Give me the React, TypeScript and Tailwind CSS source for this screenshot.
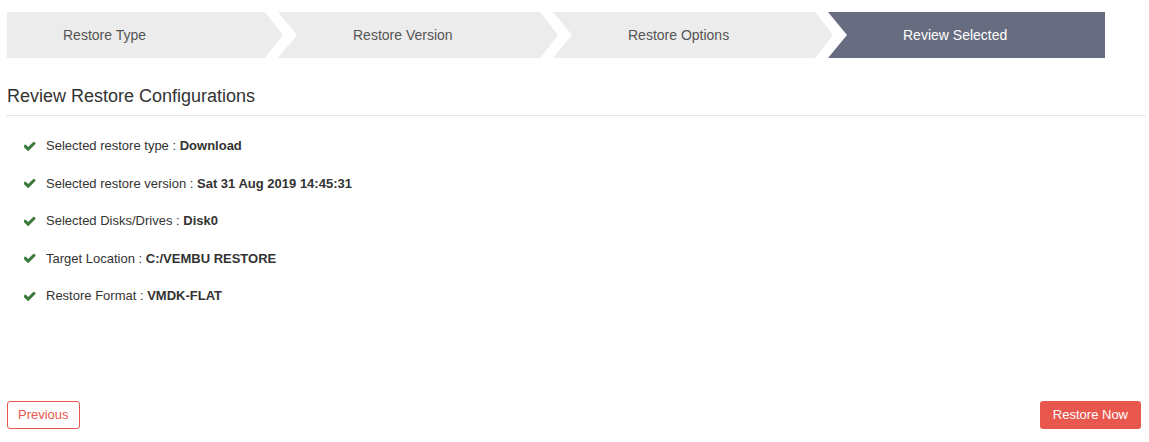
import React from 'react';

const steps = [
  { label: 'Restore Type', first: true, last: false, active: false },
  { label: 'Restore Version', first: false, last: false, active: false },
  { label: 'Restore Options', first: false, last: false, active: false },
  { label: 'Review Selected', first: false, last: true, active: true },
];

const summary: { label: string; value: string }[] = [
  { label: 'Selected restore type', value: 'Download' },
  { label: 'Selected restore version', value: 'Sat 31 Aug 2019 14:45:31' },
  { label: 'Selected Disks/Drives', value: 'Disk0' },
  { label: 'Target Location', value: 'C:/VEMBU RESTORE' },
  { label: 'Restore Format', value: 'VMDK-FLAT' },
];

const CheckIcon: React.FC = () => (
  <svg width="12" height="10" viewBox="0 0 1536 1200" className="shrink-0">
    <path
      fill="#3b7a3b"
      d="M1484 281q0 40-28 68l-724 724-136 136q-28 28-68 28t-68-28l-136-136-362-362q-28-28-28-68t28-68l136-136q28-28 68-28t68 28l294 295 656-657q28-28 68-28t68 28l136 136q28 28 28 68z"
    />
  </svg>
);

const Step: React.FC<{ label: string; first: boolean; last: boolean; active: boolean }> = ({
  label,
  first,
  last,
  active,
}) => {
  const clip = first
    ? 'polygon(0 0, calc(100% - 18px) 0, 100% 50%, calc(100% - 18px) 100%, 0 100%)'
    : last
    ? 'polygon(0 0, 100% 0, 100% 100%, 0 100%, 19px 50%)'
    : 'polygon(0 0, calc(100% - 18px) 0, 100% 50%, calc(100% - 18px) 100%, 0 100%, 19px 50%)';

  return (
    <div
      className={`h-[46px] flex items-center text-[14px] ${
        first ? 'w-[276px] pl-[56px]' : last ? 'w-[277px] -ml-[5px] pl-[75px]' : 'w-[280px] -ml-[5px] pl-[75px]'
      } ${active ? 'bg-[#686c80] text-white' : 'bg-[#ececec] text-[#555555]'}`}
      style={{ clipPath: clip }}
    >
      {label}
    </div>
  );
};

export default function App() {
  return (
    <div
      className="w-[1149px] h-[442px] bg-white flex flex-col overflow-hidden"
      style={{ fontFamily: '"Liberation Sans", Arial, sans-serif' }}
    >
      <div className="flex mt-[12px] ml-[7px]">
        {steps.map((s) => (
          <Step key={s.label} {...s} />
        ))}
      </div>

      <div className="ml-[6px] mr-[3px] mt-[27px] pb-[8px] border-b border-[#e6e6e6]">
        <h2 className="text-[18px] leading-[22px] text-[#333333] pl-[1px]">Review Restore Configurations</h2>
      </div>

      <ul className="mt-[22px] ml-[24px] flex flex-col gap-[22.5px] text-[13px] leading-[15px] text-[#333333]">
        {summary.map((row) => (
          <li key={row.label} className="flex items-center gap-[10px]">
            <CheckIcon />
            <span>
              {row.label} : <b className="font-bold">{row.value}</b>
            </span>
          </li>
        ))}
      </ul>

      <div className="mt-auto mb-[13px] mx-[7px] flex justify-between items-center">
        <button className="h-[28px] px-[10px] text-[13px] text-[#e8574d] border border-[#e8574d] rounded-[3px] bg-white">
          Previous
        </button>
        <button className="h-[28px] px-[13px] mr-[1px] text-[13px] text-white bg-[#e8574d] rounded-[3px]">
          Restore Now
        </button>
      </div>
    </div>
  );
}
